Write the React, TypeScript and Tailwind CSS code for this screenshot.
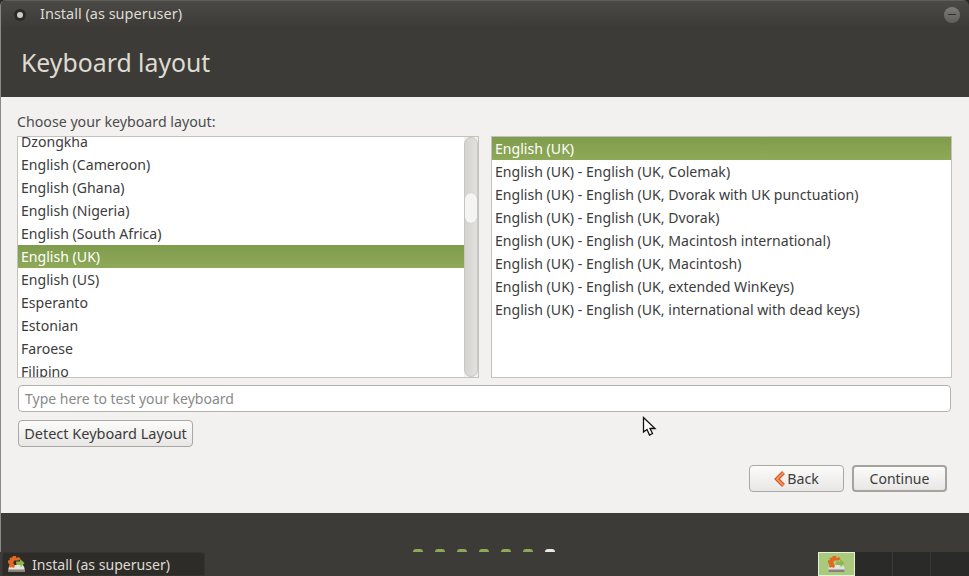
const leftRows = [
  'Dzongkha',
  'English (Cameroon)',
  'English (Ghana)',
  'English (Nigeria)',
  'English (South Africa)',
  'English (UK)',
  'English (US)',
  'Esperanto',
  'Estonian',
  'Faroese',
  'Filipino',
]

const rightRows = [
  'English (UK)',
  'English (UK) - English (UK, Colemak)',
  'English (UK) - English (UK, Dvorak with UK punctuation)',
  'English (UK) - English (UK, Dvorak)',
  'English (UK) - English (UK, Macintosh international)',
  'English (UK) - English (UK, Macintosh)',
  'English (UK) - English (UK, extended WinKeys)',
  'English (UK) - English (UK, international with dead keys)',
]

function Row({ label, selected }: { label: string; selected: boolean }) {
  return (
    <div
      className={
        selected
          ? 'h-[23px] pl-[3px] text-[14.1px] leading-[23px] whitespace-nowrap text-white bg-gradient-to-b from-[#7f9c4d] to-[#8ea957]'
          : 'h-[23px] pl-[3px] text-[14.1px] leading-[23px] whitespace-nowrap text-[#3c3c3c]'
      }
    >
      {label}
    </div>
  )
}

// installer icon: drive with an orange gear and a green arrow
function InstallerIcon() {
  return (
    <svg width="17" height="18" viewBox="0 0 17 18">
      <path d="M2 10 H15 L16.5 13 V17 H0.5 V13 Z" fill="#e4e2dc" />
      <rect x="0.5" y="14.5" width="16" height="2.5" fill="#85837b" />
      <path d="M5 1 H8 L8.5 3 L11 2 L12.5 4 L10.5 5.5 H6.5 Q5 6.5 5.5 8.5 L7 10.5 L6 13 L3.5 12 L2 13 L1 11 L1.5 9 L0 8 V5.5 L2 5 L1.5 3 L4 2.5 Z" fill="#e2691f" />
      <path d="M8 6.5 H12 V4 L16.5 8 L12.5 12.5 V10 H8.5 Z" fill="#8db64c" />
    </svg>
  )
}

export default function App() {
  return (
    <div className="relative h-[576px] w-[969px] overflow-hidden bg-[#2b2a27] font-['Noto_Sans',sans-serif] text-[14px]">
      <div className="flex h-full flex-col overflow-hidden rounded-t-[6px] border-l border-[#8a8984]">
        {/* Title bar */}
        <div className="flex h-[28px] items-center border-t border-[#5f5e58] bg-gradient-to-b from-[#4a4945] to-[#3c3b37] pl-[13px] pr-[9px]">
          <span className="flex h-[12px] w-[12px] items-center justify-center rounded-full bg-[#2b2a27]">
            <span className="h-[6px] w-[6px] rounded-full bg-[#cfcdc6]" />
          </span>
          <span className="mb-[2px] ml-[14px] text-[14.5px] text-[#dfdbd2]">Install (as superuser)</span>
          <span className="ml-auto flex h-[16px] w-[16px] items-center justify-center rounded-full bg-gradient-to-b from-[#7b7a75] to-[#5f5e59]">
            <span className="h-[1.5px] w-[8px] bg-[#2f2e2b]" />
          </span>
        </div>

        {/* Header */}
        <div className="h-[69px] bg-[#3c3b37] pl-[20px] pt-[16px] text-[24.8px] leading-[36px] text-[#dfdbd2]">
          Keyboard layout
        </div>

        {/* Content */}
        <div className="relative flex h-[416px] flex-col bg-[#f2f1f0] pl-[16px] pr-[17px]">
          <div className="h-[39px] pt-[15px] text-[14.2px] leading-[20px] text-[#4c4c4c]">
            Choose your keyboard layout:
          </div>

          <div className="flex h-[242px] gap-[12px]">
            <div className="flex w-[462px] border border-[#c4c2bd] bg-white">
              <div className="min-w-0 flex-1 overflow-hidden">
                <div className="-mt-[7px]">
                  {leftRows.map((r) => (
                    <Row key={r} label={r} selected={r === 'English (UK)'} />
                  ))}
                </div>
              </div>
              <div className="flex w-[14px] flex-col bg-[#f2f1f0]">
                <div className="h-full rounded-full border border-[#c9c7c2] bg-gradient-to-r from-[#d4d3d0] to-[#e2e1df] pt-[55px]">
                  <div className="h-[30px] rounded-full bg-[#f4f4f3] shadow-[0_0_1px_#b5b3ae]" />
                </div>
              </div>
            </div>
            <div className="w-[461px] border border-[#c4c2bd] bg-white">
              {rightRows.map((r, i) => (
                <Row key={r} label={r} selected={i === 0} />
              ))}
            </div>
          </div>

          <div className="ml-[1px] mt-[7px] flex h-[27px] w-[933px] items-center rounded-[4px] border border-[#b4b2ac] bg-white pl-[6px] text-[14px] text-[#8a8a8a]">
            Type here to test your keyboard
          </div>

          <button className="ml-[1px] mt-[8px] h-[27px] w-[175px] rounded-[4px] border border-[#aaa8a2] bg-gradient-to-b from-[#fbfbfa] to-[#e8e7e5] text-[14.5px] text-[#3c3c3c]">
            Detect Keyboard Layout
          </button>

          <div className="mr-[5px] mt-[18px] flex justify-end gap-[8px]">
            <button className="flex h-[27px] w-[95px] items-center justify-center gap-[1px] rounded-[4px] border border-[#aaa8a2] bg-gradient-to-b from-[#fbfbfa] to-[#e8e7e5] text-[14.2px] text-[#3c3c3c]">
              <svg width="12" height="16" viewBox="0 0 12 16">
                <path d="M9.5 1.5 L3 8 L9.5 14.5" fill="none" stroke="#d9531e" strokeWidth="4" strokeLinejoin="miter" />
                <path d="M9.5 1.5 L3 8 L9.5 14.5" fill="none" stroke="#f3a06e" strokeWidth="1.6" strokeLinejoin="miter" />
              </svg>
              Back
            </button>
            <button className="h-[27px] w-[95px] rounded-[4px] border-2 border-[#a5a39d] bg-gradient-to-b from-[#fbfbfa] to-[#e8e7e5] text-[14px] text-[#3c3c3c]">
              Continue
            </button>
          </div>

          {/* Mouse pointer */}
          <svg className="absolute left-[641px] top-[319px]" width="15" height="21" viewBox="0 0 15 21">
            <path d="M1.5 1.5 L1.5 16 L5 13.5 L7.5 19 L10.5 17.5 L8 12.5 L13 12.5 Z" fill="#fff" stroke="#111" strokeWidth="1.3" strokeLinejoin="miter" />
          </svg>
        </div>

        {/* Footer with step dots */}
        <div className="flex flex-1 gap-[12px] bg-[#3c3b37] pl-[412px] pt-[36px]">
          {[0, 1, 2, 3, 4, 5].map((i) => (
            <span key={i} className="h-[3px] w-[10px] rounded-t-[5px] bg-[#8ea957]" />
          ))}
          <span className="h-[3px] w-[10px] rounded-t-[5px] bg-[#e8e8e6]" />
        </div>
      </div>

      {/* Panel over the bottom of the window */}
      <div className="absolute bottom-0 left-0 flex h-[24px] w-full bg-[#3c3b37]">
        <div className="ml-[2px] flex w-[203px] items-center rounded-t-[4px] border border-[#35342f] bg-[#2d2c29] pl-[5px] text-[14.1px] text-[#dfdbd2]">
          <InstallerIcon />
          <span className="ml-[7px] mt-[1px]">Install (as superuser)</span>
        </div>
        <div className="ml-auto flex">
          <div className="flex w-[37px] items-center justify-center border border-[#e6efd8] bg-[#a9c97c]">
            <InstallerIcon />
          </div>
          <div className="w-[38px] border-r border-[#3a3936] bg-[#2a2a28]" />
          <div className="w-[38px] border-r border-[#3a3936] bg-[#2a2a28]" />
          <div className="w-[38px] bg-[#2a2a28]" />
        </div>
      </div>
    </div>
  )
}
